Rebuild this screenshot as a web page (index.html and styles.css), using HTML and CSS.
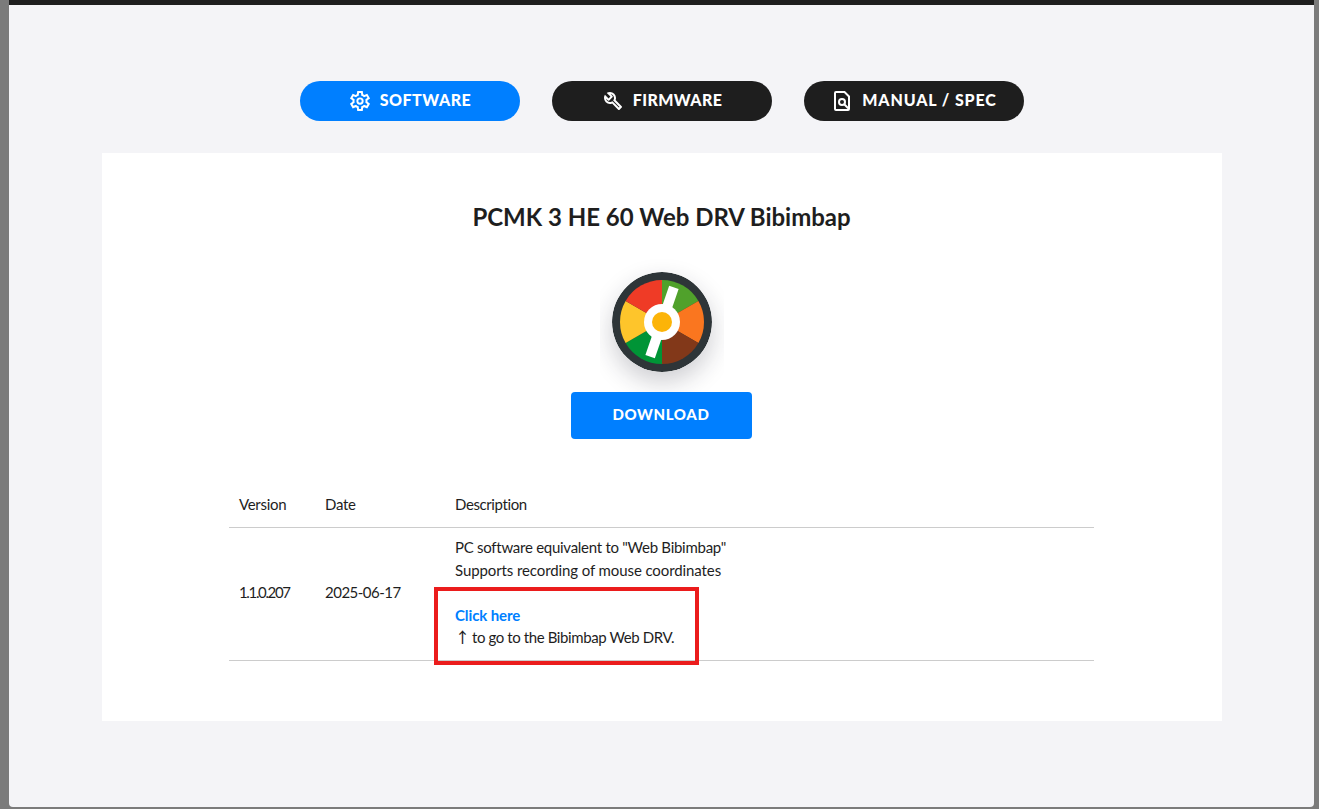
FILE: index.html
```html
<!DOCTYPE html>
<html lang="en">
<head>
  <meta charset="UTF-8">
  <meta name="viewport" content="width=device-width, initial-scale=1.0">
  <title>PCMK 3 HE 60 Web DRV Bibimbap</title>
  <link rel="stylesheet" href="styles.css">
</head>
<body>
  <main class="modal">
    <nav class="tabs">
      <a class="tab active">
        <svg class="icon" viewBox="0 -960 960 960"><path d="m370-80-16-128q-13-5-24.5-12T307-235l-119 50L78-375l103-78q-1-7-1-13.5v-27q0-6.5 1-13.5L78-585l110-190 119 50q11-8 23-15t24-12l16-128h220l16 128q13 5 24.5 12t22.5 15l119-50 110 190-103 78q1 7 1 13.5v27q0 6.5-2 13.5l103 78-110 190-118-50q-11 8-23 15t-24 12L590-80H370Zm70-80h79l14-106q31-8 57.5-23.5T639-327l99 41 39-68-86-65q5-14 7-29.5t2-31.5q0-16-2-31.5t-7-29.5l86-65-39-68-99 42q-22-23-48.5-38.5T533-694l-13-106h-79l-14 106q-31 8-57.5 23.5T321-633l-99-41-39 68 86 64q-5 15-7 30t-2 32q0 16 2 31t7 30l-86 65 39 68 99-42q22 23 48.5 38.5T427-266l13 106Z"/><circle cx="480" cy="-480" r="107" fill="none" stroke="#fff" stroke-width="76"/></svg>
        <span class="software">SOFTWARE</span>
      </a>
      <a class="tab">
        <svg class="icon" viewBox="0 -960 960 960"><path d="M686-132 444-376q-20 8-40.5 12t-43.5 4q-100 0-170-70t-70-170q0-36 10-68.5t28-61.5l146 146 72-72-146-146q29-18 61.5-28t68.5-10q100 0 170 70t70 170q0 23-4 43.5T584-516l244 242q12 12 12 29t-12 29l-84 84q-12 12-29 12t-29-12Zm29-85 27-27-256-256q18-20 26-46.5t8-53.5q0-60-38.5-104.5T386-758l74 74q12 12 12 28t-12 28L332-500q-12 12-28 12t-28-12l-74-74q9 57 53.5 95.5T360-440q26 0 52-8t47-25l256 256Z"/></svg>
        <span class="firmware">FIRMWARE</span>
      </a>
      <a class="tab">
        <svg class="icon line" viewBox="0 0 24 24"><path d="M6 3h8.5L19 7.5V20a1 1 0 0 1-1 1H6a1 1 0 0 1-1-1V4a1 1 0 0 1 1-1Z"/><circle cx="12" cy="13" r="3"/><path d="M14.2 15.2L19 20"/></svg>
        <span class="manual">MANUAL / SPEC</span>
      </a>
    </nav>

    <section class="card">
      <h2 class="title">PCMK 3 HE 60 Web DRV Bibimbap</h2>

      <div class="logo">
        <svg class="wheel" viewBox="-50 -50 100 100">
          <circle r="50" fill="#2e3538"/>
          <path d="M0 0V-42A42 42 0 0 1 36.4-21Z" fill="#50a12b"/>
          <path d="M0 0L36.4-21A42 42 0 0 1 36.4 21Z" fill="#fa761f"/>
          <path d="M0 0L36.4 21A42 42 0 0 1 0 42Z" fill="#823819"/>
          <path d="M0 0V42A42 42 0 0 1-36.4 21Z" fill="#009436"/>
          <path d="M0 0L-36.4 21A42 42 0 0 1-36.4-21Z" fill="#fec52b"/>
          <path d="M0 0L-36.4-21A42 42 0 0 1 0-42Z" fill="#ef3b26"/>
          <rect x="-5" y="-36.5" width="10" height="73" fill="#fff" transform="rotate(19)"/>
          <circle r="18" fill="#fff"/>
          <circle r="10" fill="#fcb408"/>
        </svg>
      </div>

      <a class="download"><span>DOWNLOAD</span></a>

      <table class="versions">
        <thead>
          <tr><th><span class="t-version">Version</span></th><th><span class="t-date">Date</span></th><th><span class="t-desc">Description</span></th></tr>
        </thead>
        <tbody>
          <tr>
            <td><span class="t-number">1.1.0.207</span></td>
            <td><span class="t-day">2025-06-17</span></td>
            <td class="desc">
              <span class="t-pc">PC software equivalent to "Web Bibimbap"</span><br>
              <span class="t-mouse">Supports recording of mouse coordinates</span><br>
              <br>
              <a class="link">Click here</a><br>
              <span class="arrow">↑</span><span class="t-go">to go to the Bibimbap Web DRV.</span>
              <div class="highlight"></div>
            </td>
          </tr>
        </tbody>
      </table>
    </section>
  </main>
</body>
</html>
```

FILE: styles.css
```css
* {
  box-sizing: border-box;
}

body {
  margin: 0;
  height: 809px;
  padding: 0 5px 2px 9px;
  overflow: hidden;
  background: #7b7b7b;
  color: #1e1e1e;
  font-family: Lato, sans-serif;
  font-size: 15px;
  line-height: 22.5px;
}

.modal {
  height: 807px;
  padding-top: 76px;
  border-top: 5px solid #1e1e1e;
  border-radius: 0 0 4px 4px;
  background: #f4f4f7;
}

.tabs {
  display: flex;
  justify-content: center;
  gap: 32px;
  margin-bottom: 32px;
}

.tab {
  display: flex;
  align-items: center;
  justify-content: center;
  gap: 8px;
  width: 220px;
  height: 40px;
  border-radius: 20px;
  background: #1e1e1e;
  color: #fff;
  font-size: 16px;
  font-weight: 900;
  white-space: nowrap;
}

.tab span {
  padding-bottom: 2px;
}

.tab.active {
  background: #007fff;
}

.icon {
  width: 24px;
  height: 24px;
  fill: #fff;
}

.icon.line {
  fill: none;
  stroke: #fff;
  stroke-width: 2;
}

.software {
  letter-spacing: 0.5px;
}

.firmware {
  letter-spacing: 0.4px;
}

.manual {
  letter-spacing: 0.88px;
}

.card {
  display: flex;
  flex-direction: column;
  align-items: center;
  width: 1120px;
  height: 568px;
  margin: 0 auto;
  padding-top: 46px;
  background: #fff;
}

.title {
  margin: 0;
  font-size: 24px;
  line-height: 36px;
  letter-spacing: -0.02px;
  white-space: nowrap;
}

.logo {
  display: flex;
  justify-content: center;
  width: 124px;
  height: 157px;
  padding-top: 37px;
  overflow: hidden;
}

.wheel {
  width: 100px;
  height: 100px;
  border-radius: 50%;
  box-shadow: 0 10px 24px rgba(30, 30, 50, 0.22);
}

.download {
  display: flex;
  align-items: center;
  justify-content: center;
  width: 181px;
  height: 47px;
  padding: 0 1px 2px 0;
  border-radius: 4px;
  background: #007fff;
  color: #fff;
  font-size: 15px;
  font-weight: 900;
  letter-spacing: 0.6px;
}

.versions {
  width: 865px;
  margin-top: 45px;
  border-collapse: collapse;
  table-layout: fixed;
}

.versions th,
.versions td {
  padding: 9px 10px 11px;
  border-bottom: 1px solid #ccc;
  font-weight: normal;
  text-align: left;
  white-space: nowrap;
}

.versions td {
  padding: 8.5px 10px 11.5px;
}

.versions th:nth-child(1) {
  width: 86px;
}

.versions th:nth-child(2) {
  width: 130px;
}

.t-version,
.t-date {
  letter-spacing: -0.3px;
}

.t-desc {
  letter-spacing: -0.4px;
}

.t-number {
  letter-spacing: -1.35px;
}

.t-day {
  letter-spacing: -0.5px;
}

.t-pc {
  letter-spacing: -0.27px;
}

.t-mouse {
  letter-spacing: -0.1px;
}

.t-go {
  letter-spacing: -0.4px;
}

.desc {
  position: relative;
}

.link {
  color: #007fff;
  font-weight: bold;
  letter-spacing: -0.1px;
}

.arrow {
  display: inline-block;
  width: 17px;
  font-family: "Noto Sans CJK JP", sans-serif;
  font-weight: 500;
  line-height: 20px;
}

/* red frame over the link */
.highlight {
  position: absolute;
  left: -11px;
  top: 59px;
  width: 265px;
  height: 78px;
  border: 4px solid #eb1c1c;
}
```
